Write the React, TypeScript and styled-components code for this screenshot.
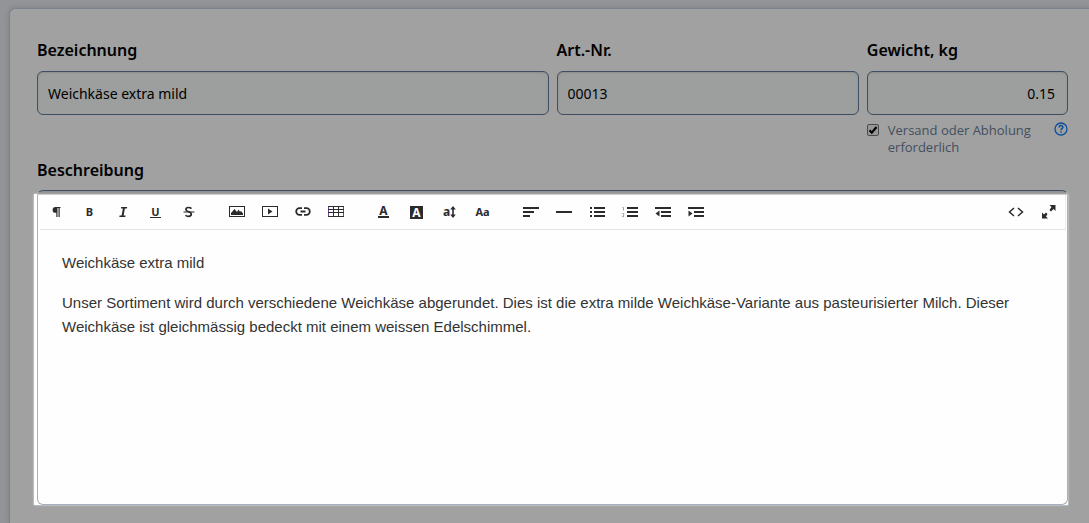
import React from 'react';
import styled, { createGlobalStyle, css } from 'styled-components';

const ui = '"Noto Sans", "Open Sans", sans-serif';

const GlobalStyle = createGlobalStyle`
  *, *::before, *::after { box-sizing: border-box; }
  body {
    margin: 0;
    background: #939498;
    font-family: ${ui};
    color: #000;
    overflow: hidden;
  }
`;

const Page = styled.main`
  padding: 8px 0 0 9px;
`;

const Card = styled.section`
  display: flex;
  flex-direction: column;
  min-height: calc(100vh - 8px);
  padding: 29px 21px 18px 27px;
  background: #a1a1a1;
  border: 1px solid #7b828c;
  border-width: 1px 0 0 1px;
  border-top-left-radius: 6px;
  box-shadow: 0 0 5px rgba(60, 64, 70, 0.25);
`;

const Fields = styled.div`
  display: grid;
  grid-template-columns: 511fr 302fr 201fr;
  column-gap: 8px;
`;

const Field = styled.div`
  display: flex;
  flex-direction: column;
`;

const labelText = css`
  font-family: ${ui};
  font-size: 16px;
  font-weight: 600;
  line-height: 24px;
`;

const Label = styled.label`
  ${labelText}
`;

const GroupLabel = styled.div`
  ${labelText}
  margin-bottom: 8px;
`;

const TextInput = styled.input<{ $end?: boolean }>`
  width: 100%;
  height: 44px;
  margin-top: 9px;
  padding: 0 ${(p) => (p.$end ? 12 : 10)}px;
  border: 1px solid #3f4e60;
  border-radius: 6px;
  background: #9c9f9e;
  box-shadow: inset 0 1px 2px rgba(0, 0, 0, 0.12);
  font-family: ${ui};
  font-size: 14px;
  color: #000;
  text-align: ${(p) => (p.$end ? 'right' : 'left')};
  outline: none;
`;

const Shipping = styled.div`
  display: grid;
  grid-template-columns: 12px 1fr 14px;
  column-gap: 9px;
  height: 43px;
  padding-top: 7px;
`;

const CheckBox = styled.span`
  display: grid;
  width: 12px;
  height: 12px;
  margin-top: 2px;
  > * { grid-area: 1 / 1; }
  svg { pointer-events: none; }
`;

const CheckInput = styled.input`
  appearance: none;
  width: 12px;
  height: 12px;
  margin: 0;
  border: 1px solid #4a4a4a;
  border-radius: 2px;
  background: #989898;
`;

const ShippingLabel = styled.label`
  font-family: "Open Sans", ${ui};
  font-size: 13px;
  line-height: 17px;
  color: #434f5e;
`;

const HelpButton = styled.button`
  width: 14px;
  height: 14px;
  padding: 0;
  border: 0;
  background: none;
  color: #0a4f9e;
  svg { display: block; }
`;

const Editor = styled.div`
  position: relative;
  flex: 1;
  display: flex;
  flex-direction: column;
  padding: 4px 1px 0 2px;
  border: 1px solid #a3b1c0;
  border-top-color: #3f4e60;
  border-radius: 6px;
  background: linear-gradient(#8d8e90 0, #a1a1a1 3px, #fefefe 4px);
  &::before {
    content: "";
    position: absolute;
    z-index: -1;
    inset: 3px -1px -1px -4px;
    background: #fefefe;
    box-shadow: 0 0 2px #eee;
  }
`;

const EditorLayer = styled.div`
  position: relative;
  z-index: 0;
  flex: 1;
  display: flex;
  flex-direction: column;
`;

const Toolbar = styled.div`
  display: flex;
  justify-content: space-between;
  height: 35px;
  border-bottom: 1px solid #e3e3e3;
  border-right: 1px solid #ececec;
  background: #fefefe;
`;

const Tools = styled.div`
  display: flex;
  column-gap: 15px;
`;

const ToolGroup = styled.div`
  display: flex;
`;

const Tool = styled.button`
  display: flex;
  align-items: center;
  justify-content: center;
  width: 33px;
  height: 34px;
  padding: 0;
  border: 0;
  background: none;
  color: #2b2b2e;
  svg { display: block; }
`;

const Content = styled.div`
  flex: 1;
  padding: 21px 22px;
  font-family: "Liberation Sans", Arial, sans-serif;
  font-size: 15px;
  line-height: 24px;
  color: #333;
  outline: none;
  p { margin: 0 0 16px; }
`;

const Glyph = styled.span<{ $size?: number }>`
  font-family: "Noto Sans", sans-serif;
  font-size: ${(p) => p.$size ?? 12}px;
  font-weight: 700;
  line-height: 12px;
`;

const Underlined = styled(Glyph)<{ $bar: number }>`
  padding: 0 1px;
  border-bottom: ${(p) => p.$bar}px solid currentColor;
  line-height: 10px;
`;

const Inverse = styled(Glyph)`
  width: 13px;
  height: 13px;
  background: #2b2b2e;
  color: #fff;
  line-height: 13px;
  text-align: center;
`;

const Icon = ({ children }: { children: React.ReactNode }) => (
  <svg width="16" height="12" viewBox="0 0 16 12" fill="currentColor" aria-hidden="true">
    {children}
  </svg>
);

const listLines = <path d="M5 1h11v2H5zM5 5h11v2H5zM5 9h11v2H5z" />;

const groups: { name: string; icon: React.ReactNode }[][] = [
  [
    {
      name: 'Absatzformat',
      icon: <Icon><path d="M6.500 1H11.500v1h-.8v9H9.500V2H8.500v9H7.300V6.800H6.500A2.900 2.900 0 0 1 6.500 1z" /></Icon>,
    },
    { name: 'Fett', icon: <Glyph $size={11}>B</Glyph> },
    {
      name: 'Kursiv',
      icon: <Icon><path d="M6.200 1h6l-.3 1.500h-2L8.600 9.500h2l-.3 1.500h-6l.3-1.500h2L7.900 2.500h-2z" /></Icon>,
    },
    { name: 'Unterstrichen', icon: <Underlined $size={11} $bar={1}>U</Underlined> },
    {
      name: 'Durchgestrichen',
      icon: (
        <Icon>
          <path d="M10.500 2.600C9.500 1.700 8.500 1.500 7.500 1.500 5.900 1.500 4.900 2.300 4.900 3.500 4.900 6.200 10.300 5.300 10.300 8.100 10.300 9.600 9 10.400 7.500 10.400 6.300 10.400 5.200 10 4.500 9.200" fill="none" stroke="currentColor" strokeWidth="1.700" />
          <path d="M2.500 5.500h11v1h-11z" />
        </Icon>
      ),
    },
  ],
  [
    {
      name: 'Bild',
      icon: <Icon><path fillRule="evenodd" d="M0 0h16v11H0zM1 1v9h14V1z" /><path d="M2 9V7l3.500-4L8 6l1.500-2.500 1.500 2.300 1-.8 2 2.500V9z" /></Icon>,
    },
    {
      name: 'Video',
      icon: <Icon><path fillRule="evenodd" d="M0 0h16v11H0zM1 1v9h14V1z" /><path d="M6 2.500l4.500 3L6 8.500z" /></Icon>,
    },
    {
      name: 'Link',
      icon: (
        <Icon>
          <path d="M7 2.200H4.500a3.300 3.300 0 0 0 0 6.600H7M9 2.200h2.500a3.300 3.300 0 0 1 0 6.600H9M5.500 5.500h5" fill="none" stroke="currentColor" strokeWidth="1.800" />
        </Icon>
      ),
    },
    {
      name: 'Tabelle',
      icon: <Icon><path fill="#6a4a8a" fillRule="evenodd" d="M0 0h16v11H0zM1 1v9h14V1z" /><path d="M0 0h16v1H0zM0 3h16v1H0zM0 6h16v1H0zM0 10h16v1H0zM5 0h1v11H5zM10 0h1v11h-1z" /></Icon>,
    },
  ],
  [
    { name: 'Textfarbe', icon: <Underlined $bar={2}>A</Underlined> },
    { name: 'Hintergrundfarbe', icon: <Inverse>A</Inverse> },
    {
      name: 'Schriftgrösse',
      icon: (
        <>
          <Glyph>a</Glyph>
          <svg width="6" height="12" viewBox="0 0 6 12" fill="currentColor" aria-hidden="true">
            <path d="M3 0l2.800 3.400H3.800v5.200h2L3 12 .2 8.600h2V3.400h-2z" />
          </svg>
        </>
      ),
    },
    { name: 'Schriftart', icon: <Glyph $size={11}>Aa</Glyph> },
  ],
  [
    { name: 'Ausrichtung', icon: <Icon><path d="M0 1h16v2H0zM0 5h11v2H0zM0 9h7v2H0z" /></Icon> },
    { name: 'Trennlinie', icon: <Icon><path d="M0 5h16v2H0z" /></Icon> },
    { name: 'Aufzählung', icon: <Icon>{listLines}<path d="M1 1h2v2H1zM1 5h2v2H1zM1 9h2v2H1z" /></Icon> },
    {
      name: 'Nummerierung',
      icon: (
        <Icon>
          {listLines}
          <path d="M.5 1.500h1v3M.3 7.500h1.500v1.500l-1.200 1.500h1.500" fill="none" stroke="#888" strokeWidth=".8" />
        </Icon>
      ),
    },
    { name: 'Einzug verkleinern', icon: <Icon><path d="M0 1h16v2H0zM6 5h10v2H6zM6 9h10v2H6zM4.500 4.500v6L.5 7.500z" /></Icon> },
    { name: 'Einzug vergrössern', icon: <Icon><path d="M0 1h16v2H0zM6 5h10v2H6zM6 9h10v2H6zM.5 4.500v6l4-3z" /></Icon> },
  ],
];

const viewTools = [
  {
    name: 'Quelltext',
    icon: <Icon><path d="M6 2L1.500 6 6 10M10 2l4.500 4L10 10" fill="none" stroke="currentColor" strokeWidth="1.500" /></Icon>,
  },
  {
    name: 'Vollbild',
    icon: (
      <svg width="14" height="14" viewBox="0 0 14 14" fill="currentColor" aria-hidden="true">
        <path d="M7.500 0H13.500v6l-2-2L9 6.500 7.500 5 9.500 2zM6 13.500H0V7.500l2 2L4 7.500 5.500 9 4 11.500z" />
      </svg>
    ),
  },
];

export default function App() {
  return (
    <>
      <GlobalStyle />
      <Page>
        <Card>
          <Fields>
            <Field>
              <Label htmlFor="name">Bezeichnung</Label>
              <TextInput id="name" defaultValue="Weichkäse extra mild" />
            </Field>
            <Field>
              <Label htmlFor="sku">Art.-Nr.</Label>
              <TextInput id="sku" defaultValue="00013" />
            </Field>
            <Field>
              <Label htmlFor="weight">Gewicht, kg</Label>
              <TextInput id="weight" $end defaultValue="0.15" />
              <Shipping>
                <CheckBox>
                  <CheckInput id="shipping" type="checkbox" defaultChecked />
                  <svg width="12" height="12" viewBox="0 0 12 12" aria-hidden="true">
                    <path d="M2.500 6.200l2.300 2.500L9.500 3" fill="none" stroke="#000" strokeWidth="2.200" />
                  </svg>
                </CheckBox>
                <ShippingLabel htmlFor="shipping">Versand oder Abholung erforderlich</ShippingLabel>
                <HelpButton type="button" aria-label="Hilfe">
                  <svg width="14" height="14" viewBox="0 0 14 14" fill="none" stroke="currentColor" aria-hidden="true">
                    <circle cx="7" cy="7" r="6" strokeWidth="1.300" />
                    <path d="M5.200 5.400c0-2.400 3.700-2.300 3.700-.2C8.900 6.600 7 6.600 7 8.200" strokeWidth="1.500" />
                    <path d="M7 9.200v1.500" strokeWidth="1.500" />
                  </svg>
                </HelpButton>
              </Shipping>
            </Field>
          </Fields>
          <GroupLabel id="description">Beschreibung</GroupLabel>
          <EditorLayer>
            <Editor>
              <Toolbar role="toolbar" aria-label="Formatierung">
                <Tools>
                  {groups.map((group) => (
                    <ToolGroup key={group[0].name}>
                      {group.map((tool) => (
                        <Tool key={tool.name} type="button" aria-label={tool.name}>{tool.icon}</Tool>
                      ))}
                    </ToolGroup>
                  ))}
                </Tools>
                <ToolGroup>
                  {viewTools.map((tool) => (
                    <Tool key={tool.name} type="button" aria-label={tool.name}>{tool.icon}</Tool>
                  ))}
                </ToolGroup>
              </Toolbar>
              <Content role="textbox" aria-multiline="true" aria-labelledby="description" contentEditable suppressContentEditableWarning spellCheck={false}>
                <p>Weichkäse extra mild</p>
                <p>
                  Unser Sortiment wird durch verschiedene Weichkäse abgerundet. Dies ist die extra milde
                  Weichkäse-Variante aus pasteurisierter Milch. Dieser Weichkäse ist gleichmässig bedeckt mit
                  einem weissen Edelschimmel.
                </p>
              </Content>
            </Editor>
          </EditorLayer>
        </Card>
      </Page>
    </>
  );
}
